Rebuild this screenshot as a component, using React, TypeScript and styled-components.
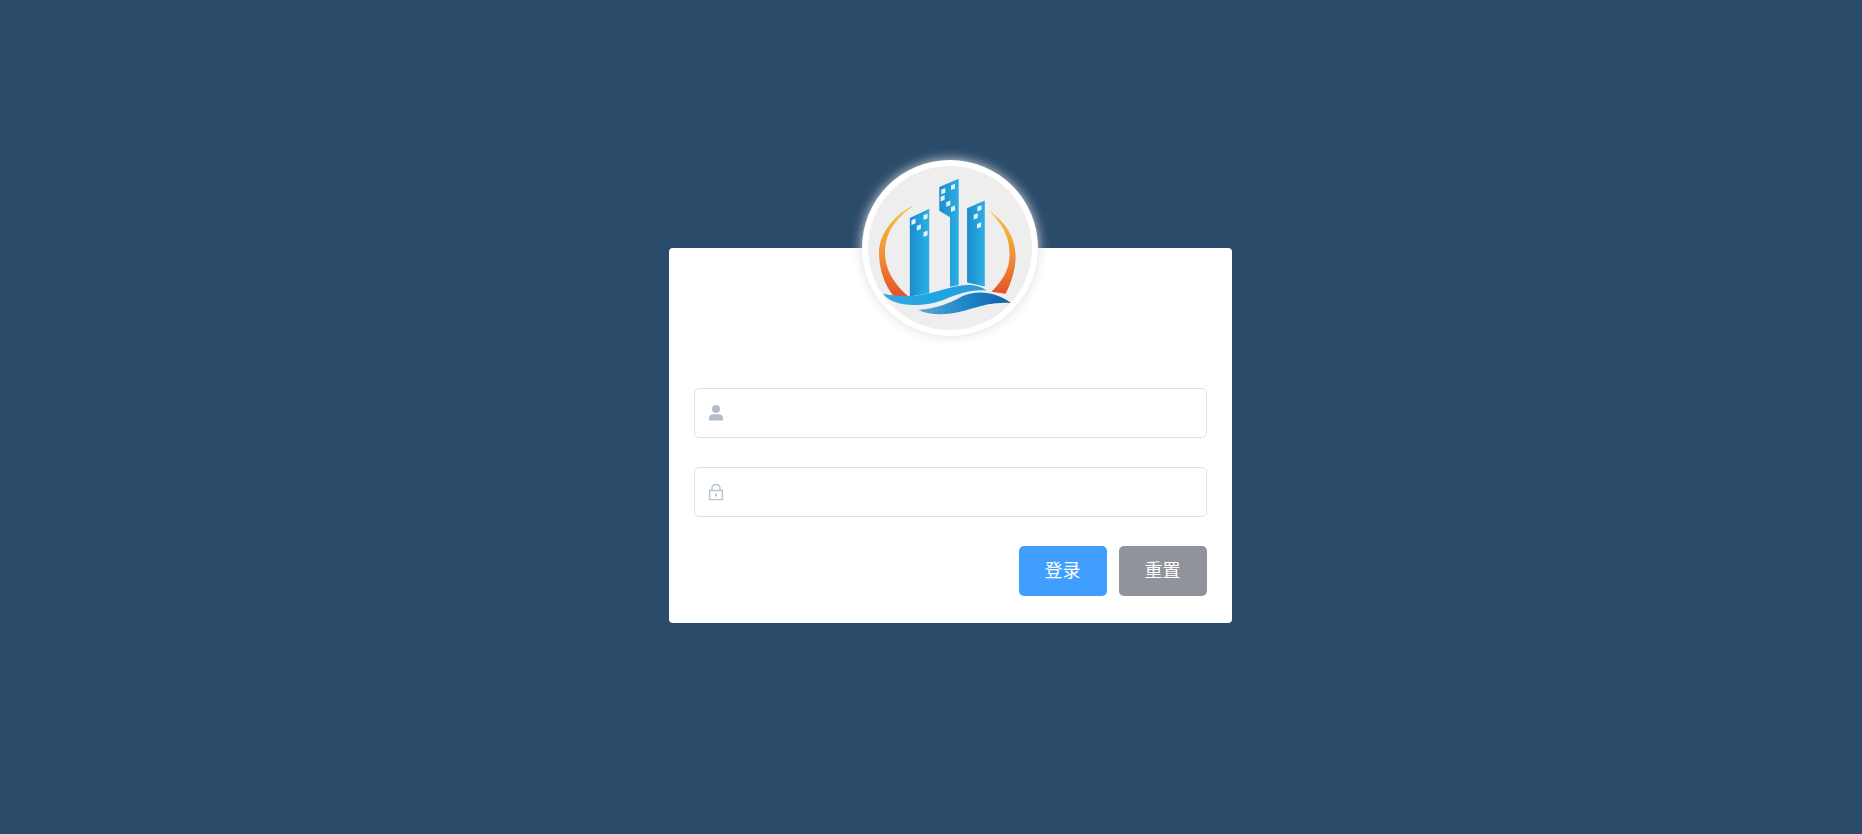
import styled, { createGlobalStyle } from 'styled-components';

const windows = [
  [185, 214],
  [221, 199],
  [201, 231],
  [221, 250],
  [274, 123],
  [303, 110],
  [272, 144],
  [289, 160],
  [303, 175],
  [382, 174],
  [371, 198],
  [381, 225],
];

const GlobalStyle = createGlobalStyle`
  html, body {
    margin: 0;
    height: 100%;
    background-color: #2b4b6b;
  }
  #root {
    height: 100%;
  }
`;

const Logo = () => (
  <LogoSvg viewBox="55 52 490 490">
    <defs>
      <linearGradient id="arc" x1="0" y1="0" x2="0" y2="1">
        <stop offset="0" stopColor="#f5c63c" />
        <stop offset="0.55" stopColor="#f09034" />
        <stop offset="1" stopColor="#e4512b" />
      </linearGradient>
      <linearGradient id="tower" x1="0" y1="0" x2="1" y2="0">
        <stop offset="0" stopColor="#1a8ccf" />
        <stop offset="1" stopColor="#2cb0e4" />
      </linearGradient>
      <linearGradient id="waveTop" x1="0" y1="0" x2="1" y2="0">
        <stop offset="0" stopColor="#3aa5dc" />
        <stop offset="0.5" stopColor="#1fa6e2" />
        <stop offset="1" stopColor="#2a9bd8" />
      </linearGradient>
      <linearGradient id="waveLow" x1="0" y1="0" x2="1" y2="0">
        <stop offset="0" stopColor="#5aa8d8" />
        <stop offset="0.55" stopColor="#1b83c6" />
        <stop offset="1" stopColor="#125fa6" />
      </linearGradient>
    </defs>
    <path
      fill="url(#arc)"
      d="M194 168C130 200 88 255 88 312C88 362 105 408 132 442L176 442C132 404 106 362 106 312C106 258 130 214 194 168Z"
    />
    <path
      fill="url(#arc)"
      d="M416 186C466 218 496 268 496 322C496 365 482 402 466 434L424 428C456 396 478 362 478 318C478 266 462 232 416 186Z"
    />
    <path fill="url(#tower)" d="M180 207L238 180V432L180 442Z" />
    <path fill="url(#tower)" d="M268 115L326 90V408L300 413V205L268 186Z" />
    <path fill="url(#tower)" d="M351 178L404 155V412L351 400Z" />
    <g fill="#e8f4fb">
      {windows.map(([x, y]) => (
        <path key={`${x}-${y}`} d={`M${x} ${y}l12 -5v14l-12 5Z`} />
      ))}
    </g>
    <path
      fill="url(#waveTop)"
      d="M100 433C160 447 220 440 270 424C320 408 372 396 410 424C360 420 320 436 280 452C225 472 130 478 100 433Z"
    />
    <path
      fill="url(#waveLow)"
      d="M205 482C260 478 300 462 335 442C380 420 440 428 482 461C440 458 405 465 365 478C320 493 255 505 205 482Z"
    />
  </LogoSvg>
);

const UserIcon = () => (
  <FieldSvg viewBox="0 0 16 18">
    <circle cx="8" cy="5" r="4" fill="#b4bccc" />
    <path fill="#b4bccc" d="M1 16.5V13.5C1 11.5 3 10.5 5 10.2H11C13 10.5 15 11.5 15 13.5V16.5Z" />
  </FieldSvg>
);

const LockIcon = () => (
  <FieldSvg viewBox="0 0 16 18">
    <path
      fill="none"
      stroke="#b9c3d6"
      strokeWidth="1.4"
      d="M4 7.5V5.5C4 3 5.8 1.5 8 1.5C10.2 1.5 12 3 12 5.5V7.5M1.6 7.5H14.4V16.6H1.6Z"
    />
    <path stroke="#a9b3c6" strokeWidth="1.4" d="M8 10.5V13.5" />
  </FieldSvg>
);

const App = () => {
  return (
    <Page>
      <GlobalStyle />
      <Card>
        <Avatar>
          <Logo />
        </Avatar>
        <Form onSubmit={(e) => e.preventDefault()}>
          <Field>
            <IconSlot>
              <UserIcon />
            </IconSlot>
            <Input type="text" />
          </Field>
          <Field>
            <IconSlot>
              <LockIcon />
            </IconSlot>
            <Input type="password" />
          </Field>
          <Buttons>
            <Button type="submit" $tone="#409eff">
              登录
            </Button>
            <Button type="button" $tone="#909399">
              重置
            </Button>
          </Buttons>
        </Form>
      </Card>
    </Page>
  );
};

export default App;

const Page = styled.div`
  height: 100%;
  box-sizing: border-box;
  padding: 248px 0 0 38px;
  display: flex;
  justify-content: center;
  align-items: flex-start;
  overflow: hidden;
`;
const Card = styled.div`
  position: relative;
  width: 563px;
  height: 375px;
  border-radius: 4px;
  background-color: #fff;
`;
const Avatar = styled.div`
  position: absolute;
  left: 50%;
  top: 0;
  width: 176px;
  height: 176px;
  box-sizing: border-box;
  padding: 6px;
  border-radius: 50%;
  background-color: #fff;
  box-shadow: 0 0 12px #ddd;
  transform: translate(-50%, -50%);
`;
const LogoSvg = styled.svg`
  display: block;
  width: 100%;
  height: 100%;
  border-radius: 50%;
  background-color: #eee;
  filter: blur(0.4px);
`;
const Form = styled.form`
  box-sizing: border-box;
  height: 100%;
  padding: 140px 25px 0;
  display: flex;
  flex-direction: column;
  gap: 29px;
`;
const Field = styled.div`
  position: relative;
  height: 50px;
`;
const IconSlot = styled.span`
  position: absolute;
  left: 14px;
  top: 50%;
  display: flex;
  transform: translateY(-50%);
`;
const FieldSvg = styled.svg`
  display: block;
  width: 16px;
  height: 18px;
`;
const Input = styled.input`
  display: block;
  width: 100%;
  height: 100%;
  box-sizing: border-box;
  padding: 0 38px;
  border: 1.5px solid #dfe1e7;
  border-radius: 5px;
  outline: none;
  background-color: #fff;
  font-family: 'Liberation Sans', sans-serif;
  font-size: 17.5px;
  color: #606266;
`;
const Buttons = styled.div`
  display: flex;
  justify-content: flex-end;
  gap: 12px;
`;
const Button = styled.button<{ $tone: string }>`
  width: 88px;
  height: 50px;
  padding: 0 0 4px;
  border: none;
  border-radius: 5px;
  background-color: ${(p) => p.$tone};
  color: #fff;
  font-family: 'Noto Sans CJK SC', sans-serif;
  font-size: 18px;
  cursor: pointer;
`;
